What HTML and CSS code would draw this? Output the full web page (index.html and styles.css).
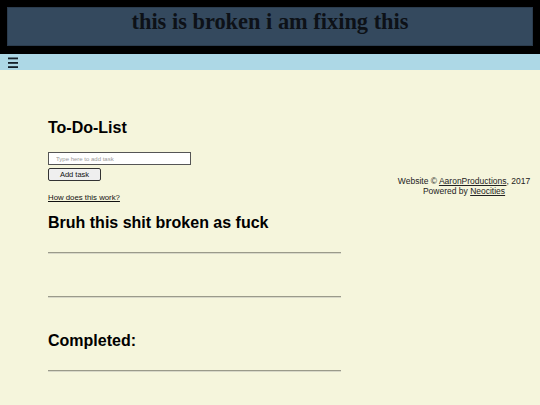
FILE: index.html
```html
<!DOCTYPE html>
<html>
<head>
<meta charset="utf-8">
<link rel="stylesheet" href="styles.css">
</head>
<body>
<header class="top">
  <div class="banner"><h1 class="title">this is broken i am fixing this</h1></div>
</header>
<nav class="navbar">
  <svg class="burger" width="10" height="11" viewBox="0 0 10 11" aria-label="menu">
    <rect x="0" y="0.5" width="10" height="1.8" fill="#15202a"/>
    <rect x="0" y="5" width="10" height="1.8" fill="#15202a"/>
    <rect x="0" y="9.2" width="10" height="1.8" fill="#15202a"/>
  </svg>
</nav>
<main class="content">
  <section class="todo">
    <h2 class="heading">To-Do-List</h2>
    <input class="task-input" type="text" placeholder="Type here to add task">
    <button class="add-btn">Add task</button>
    <a class="help" href="#">How does this work?</a>
    <h2 class="heading sub">Bruh this shit broken as fuck</h2>
    <div class="rule first"></div>
    <div class="rule second"></div>
    <h2 class="heading done">Completed:</h2>
    <div class="rule third"></div>
  </section>
  <aside class="credits">
    <p class="credit-line">Website © <a href="#">AaronProductions</a>, 2017</p>
    <p class="credit-line">Powered by <a href="#">Neocities</a></p>
  </aside>
</main>
</body>
</html>
```
FILE: styles.css
```css
html, body { margin: 0; padding: 0; }
body {
  background: #f5f5dc;
  font-family: "Liberation Sans", Arial, sans-serif;
  color: #000;
  width: 540px;
  height: 405px;
  overflow: hidden;
}
.top {
  background: #000;
  padding: 7px 7px 8px 7px;
}
.banner {
  background: #34495e;
  border: 1px solid #2b3c4e;
  height: 37px;
  display: flex;
  justify-content: center;
}
.title {
  margin: 0;
  font-family: "Liberation Serif", "Times New Roman", serif;
  font-size: 22.4px;
  font-weight: bold;
  line-height: 28px;
  color: #0d1117;
}
.navbar {
  background: #add8e6;
  height: 16px;
  padding-left: 8px;
  display: flex;
  align-items: center;
}
.burger { display: block; }
.content {
  display: flex;
  padding-left: 48px;
}
.todo {
  width: 293px;
  flex: none;
  display: flex;
  flex-direction: column;
  align-items: flex-start;
  padding-top: 48px;
}
.heading {
  margin: 0;
  font-size: 16px;
  font-weight: bold;
  line-height: 20px;
}
.task-input {
  margin-top: 14px;
  width: 143px;
  height: 13px;
  box-sizing: border-box;
  border: 1px solid #555;
  background: #fff;
  font-size: 6px;
  padding: 0 0 0 7px;
  font-family: "Liberation Sans", Arial, sans-serif;
}
.task-input::placeholder { color: #999; }
.add-btn {
  margin-top: 3px;
  width: 53px;
  height: 13px;
  box-sizing: border-box;
  border: 1px solid #333;
  border-radius: 2px;
  background: #efefef;
  font-size: 7.5px;
  padding: 0;
  font-family: "Liberation Sans", Arial, sans-serif;
  color: #111;
}
.help {
  margin-top: 12px;
  font-size: 7.8px;
  color: #111;
  line-height: 10px;
}
.sub { margin-top: 10px; }
.rule {
  width: 293px;
  height: 0;
  border-top: 1px solid #9a9a8a;
  border-bottom: 1px solid #d8d8c8;
}
.first { margin-top: 19px; }
.second { margin-top: 42px; }
.done { margin-top: 33px; }
.third { margin-top: 19px; }
.credits {
  margin-top: 106px;
  flex: 1;
  padding-left: 47px;
  display: flex;
  flex-direction: column;
  align-items: center;
}
.credit-line {
  margin: 0;
  font-size: 8.5px;
  line-height: 10px;
  color: #222;
  white-space: nowrap;
}
.credit-line a { color: #222; }
```
